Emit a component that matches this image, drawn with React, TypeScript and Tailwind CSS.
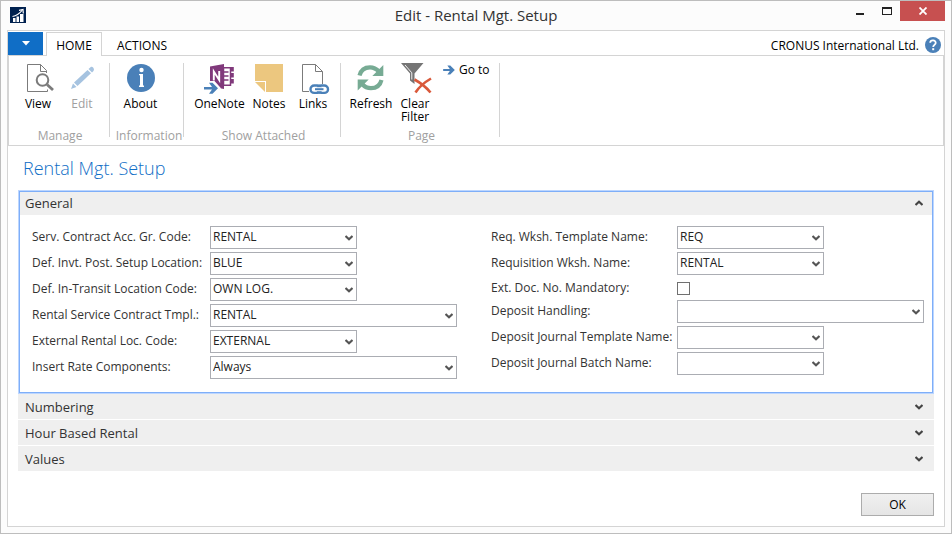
import { useState, type ReactNode } from "react";

function Chevron({ up = false, className = "" }: { up?: boolean; className?: string }) {
  return (
    <svg viewBox="0 0 8 6" className={`h-[6px] w-[8px] ${className}`} aria-hidden="true">
      <path
        d={up ? "M0.5 5L4 1.8L7.5 5" : "M0.5 1L4 4.2L7.5 1"}
        fill="none"
        stroke="currentColor"
        strokeWidth="2.2"
      />
    </svg>
  );
}

function Icon({ children }: { children: ReactNode }) {
  return (
    <svg viewBox="0 0 32 32" className="h-8 w-8 shrink-0 overflow-visible" fill="none" aria-hidden="true">
      {children}
    </svg>
  );
}

const ViewIcon = () => (
  <Icon>
    <path d="M24.5 11V8.5L18.5 2.5H5.5V29.5H25.5V27.5" stroke="#7b7b7b" />
    <path d="M18.5 2.5V9.5H25" stroke="#7b7b7b" />
    <circle cx="20.5" cy="18" r="5.8" fill="#fff" stroke="#7b7b7b" strokeWidth="2" />
    <path d="M25 22.5L31 28" stroke="#7b7b7b" strokeWidth="2.8" />
  </Icon>
);

const EditIcon = () => (
  <Icon>
    <path d="M5 27L7 21.5L10.5 25Z" fill="#a6c3e0" />
    <path d="M8 20.5L21.5 8L25 11.3L11.5 24Z" fill="#a6c3e0" />
    <path d="M22.5 7L25 4.8Q26.5 4.5 27.5 6T27.5 9L26 10.4Z" fill="#a6c3e0" />
  </Icon>
);

const AboutIcon = () => (
  <Icon>
    <circle cx="16" cy="16" r="14" fill="#4a80b8" />
    <circle cx="16.5" cy="8" r="2.2" fill="#fff" />
    <path d="M14 12H18V23.5H19V25H14V23.5H15V13.3H14Z" fill="#fff" />
  </Icon>
);

const ArrowShape = () => <path d="M0 4.7H8L5 0.5H8.5L14 6L8.5 11.5H5L8 7.3H0Z" fill="#4a80b8" />;

const OneNoteIcon = () => (
  <Icon>
    <path d="M19.5 5.7H26.5V23.3H19.5Z" fill="#fff" stroke="#80397b" strokeWidth="1.5" />
    <path d="M20 10H24.5M20 14H24.5M20 18H24.5" stroke="#80397b" strokeWidth="1.6" />
    <path d="M26.5 5H29.8V9.5H26.5ZM26.5 11H29.8V15.5H26.5ZM26.5 17H29.8V21.5H26.5Z" fill="#80397b" />
    <path d="M6 4.5L20 2V27L12 25.5L6 24Z" fill="#80397b" />
    <path d="M9.8 18.5V9.5L15.2 18V9" stroke="#fff" strokeWidth="1.9" />
    <path d="M3 19H10.5L17 26.3L10.5 33H3V28.7H-1V23.9H3Z" fill="#fff" />
    <g transform="translate(0 20.3)">
      <ArrowShape />
    </g>
  </Icon>
);

const NotesIcon = () => (
  <Icon>
    <path d="M2 2H30V30H13V19H2Z" fill="#ecc77f" />
    <path d="M2 20H12V30Z" fill="#ecc77f" />
  </Icon>
);

const LinksIcon = () => (
  <Icon>
    <path d="M12 29.5H5.5V2.5H18.5L25.5 9.5V22" stroke="#7b7b7b" />
    <path d="M18.5 2.5V9.5H25.5" stroke="#7b7b7b" />
    <rect x="13.5" y="23.5" width="10.5" height="7.4" rx="3.7" stroke="#4a80b8" strokeWidth="2.4" />
    <rect x="20.5" y="23.5" width="10.5" height="7.4" rx="3.7" stroke="#4a80b8" strokeWidth="2.4" />
    <path d="M18 27.2H26.5" stroke="#fff" strokeWidth="4" />
    <path d="M18 27.2H26.5" stroke="#4a80b8" strokeWidth="2" />
  </Icon>
);

const RefreshIcon = () => (
  <Icon>
    <path d="M4.5 13.5C6 7.5 9.5 5.3 15 5.3C19 5.3 21.5 6.8 24 9.5" stroke="#77ab94" strokeWidth="4.2" />
    <path d="M28.3 3V14H17.3Z" fill="#77ab94" />
    <path d="M26.5 18C25 24 21.5 26.2 16 26.2C12 26.2 9.5 24.7 7 22" stroke="#77ab94" strokeWidth="4.2" />
    <path d="M2.7 28.5V17.5H13.7Z" fill="#77ab94" />
  </Icon>
);

const ClearFilterIcon = () => (
  <Icon>
    <path d="M2 1H24.5L15.5 11.5V22L11 18.5V11.5Z" fill="#757575" />
    <path d="M6 3L12.8 10.8V17.5" stroke="#fff" strokeWidth="0.9" />
    <path d="M15.5 17.5C20 20 27 25 31.5 30.5" stroke="#d9593b" strokeWidth="2.6" />
    <path d="M32 16.5C26 20 20 25 16.5 30.5" stroke="#d9593b" strokeWidth="2.6" />
  </Icon>
);

function Tool({ icon, label, wide, disabled }: { icon: ReactNode; label: string; wide?: boolean; disabled?: boolean }) {
  return (
    <button
      type="button"
      disabled={disabled}
      className={`flex flex-col items-center text-center leading-[13px] ${wide ? "w-[55px]" : "w-[44px]"} ${disabled ? "text-[#a0a0a0]" : "text-black"}`}
    >
      {icon}
      <span className="mt-[3px]">{label}</span>
    </button>
  );
}

function Group({ caption, className = "pr-[5px] pl-2", children }: { caption: string; className?: string; children: ReactNode }) {
  return (
    <section aria-label={caption} className={`flex flex-col border-r border-[#d4d4d4] ${className}`}>
      <div className="-mt-px flex flex-1 items-start">{children}</div>
      <div className="-mb-1 h-[11px] text-center leading-[11px] whitespace-nowrap text-[#a0a0a0]">{caption}</div>
    </section>
  );
}

type FieldDef = { id: string; label: string; value?: string; wide?: boolean; check?: boolean };

const leftFields: FieldDef[] = [
  { id: "acc", label: "Serv. Contract Acc. Gr. Code:", value: "RENTAL" },
  { id: "invt", label: "Def. Invt. Post. Setup Location:", value: "BLUE" },
  { id: "transit", label: "Def. In-Transit Location Code:", value: "OWN LOG." },
  { id: "tmpl", label: "Rental Service Contract Tmpl.:", value: "RENTAL", wide: true },
  { id: "ext", label: "External Rental Loc. Code:", value: "EXTERNAL" },
  { id: "rate", label: "Insert Rate Components:", value: "Always", wide: true },
];

const rightFields: FieldDef[] = [
  { id: "reqt", label: "Req. Wksh. Template Name:", value: "REQ" },
  { id: "reqn", label: "Requisition Wksh. Name:", value: "RENTAL" },
  { id: "doc", label: "Ext. Doc. No. Mandatory:", check: true },
  { id: "dep", label: "Deposit Handling:", wide: true },
  { id: "djt", label: "Deposit Journal Template Name:" },
  { id: "djb", label: "Deposit Journal Batch Name:" },
];

function Field({ field, labelClass }: { field: FieldDef; labelClass: string }) {
  return (
    <div className={`flex items-center ${field.check ? "h-[22px] pt-[2px]" : "h-[26px]"}`}>
      <label htmlFor={field.id} className={`shrink-0 whitespace-nowrap ${labelClass}`}>
        {field.label}
      </label>
      {field.check ? (
        <input
          id={field.id}
          type="checkbox"
          className="h-[13px] w-[13px] appearance-none border border-[#707070] bg-white checked:bg-[#707070]"
        />
      ) : (
        <div className={`relative ${field.wide ? "w-[247px]" : "w-[147px]"}`}>
          <select
            id={field.id}
            defaultValue={field.value ?? ""}
            className="block h-[23px] w-full appearance-none border border-[#abadb3] bg-white pr-5 pb-px pl-[2px] text-[#222]"
          >
            <option value={field.value ?? ""}>{field.value ?? ""}</option>
          </select>
          <Chevron className="pointer-events-none absolute top-[9px] right-1 text-[#555]" />
        </div>
      )}
    </div>
  );
}

function SectionHeader({ title, open, framed, onClick }: { title: string; open?: boolean; framed?: boolean; onClick?: () => void }) {
  return (
    <button
      type="button"
      aria-expanded={!!open}
      onClick={onClick}
      className={`flex w-full items-center justify-between bg-[#efefef] text-left text-[13px] leading-5 text-[#333] ${framed ? "h-[23px] pr-[9px] pb-px pl-[5px]" : "h-[25px] pr-[11px] pl-[7px]"}`}
    >
      {title}
      <Chevron up={open} className="text-[#444]" />
    </button>
  );
}

export default function App() {
  const [open, setOpen] = useState(true);
  return (
    <div className="flex min-h-screen flex-col border border-[#bdbdbd] bg-[#fcfcfc] px-[6px] pb-[6px] font-['Open_Sans','Noto_Sans',sans-serif] text-[12px] text-[#333]">
      <header className="grid h-[29px] grid-cols-[1fr_auto_1fr] items-start">
        <svg viewBox="0 0 16 16" className="mt-[6px] ml-[3px] h-4 w-4" aria-hidden="true">
          <path d="M0 0H16V16H0Z" fill="#00214f" />
          <path d="M3 11H5.5V15H3ZM6.5 9.5H9V15H6.5ZM10 7H13.5V15H10Z" fill="#fff" />
          <path d="M2.5 9.5Q8 8.5 12 3.5M9 3.3L13 2.5L13.3 6.5" fill="none" stroke="#fff" strokeWidth="1.2" />
        </svg>
        <h1 className="text-[15px] leading-[29px] text-[#333]">Edit - Rental Mgt. Setup</h1>
        <div className="flex justify-end">
          <button type="button" aria-label="Minimize" className="flex h-5 w-[27px] items-center justify-center">
            <svg viewBox="0 0 8 8" className="h-2 w-2"><path d="M0 6H8V8H0Z" fill="#222" /></svg>
          </button>
          <button type="button" aria-label="Maximize" className="flex h-5 w-[27px] items-center justify-center">
            <svg viewBox="0 0 10 8" className="h-2 w-[10px]"><path d="M0 0H10V8H0ZM1 2V7H9V2Z" fill="#222" fillRule="evenodd" /></svg>
          </button>
          <button type="button" aria-label="Close" className="flex h-5 w-[45px] items-center justify-center bg-[#c75050]">
            <svg viewBox="0 0 8 8" className="h-2 w-2"><path d="M0.5 0.5L7.5 7.5M7.5 0.5L0.5 7.5" stroke="#fff" strokeWidth="1.8" /></svg>
          </button>
        </div>
      </header>

      <div className="flex flex-1 flex-col border border-[#d4d4d4] bg-white">
        <nav className="flex h-[25px] items-end pt-px">
          <div className="flex h-full w-[38px] shrink-0 border-b border-[#d4d4d4]">
            <button type="button" aria-label="Application menu" className="flex h-[23px] w-[35px] items-center justify-center bg-[#106ec6]">
              <svg viewBox="0 0 8 5" className="h-[5px] w-2"><path d="M0 0H8L4 4.5Z" fill="#fff" /></svg>
            </button>
          </div>
          <button type="button" className="h-full w-[56px] shrink-0 border border-b-0 border-[#d4d4d4] pt-[2px] text-black">
            HOME
          </button>
          <div className="flex h-full flex-1 items-center justify-between border-b border-[#d4d4d4] pt-1 pr-[3px] text-black">
            <button type="button" className="w-[80px]">ACTIONS</button>
            <div className="flex items-center gap-[6px]">
              <span>CRONUS International Ltd.</span>
              <button type="button" aria-label="Help" className="pb-[2px]">
                <svg viewBox="0 0 16 16" className="block h-4 w-4">
                  <circle cx="8" cy="8" r="8" fill="#4a80b8" />
                  <path d="M5.2 5.8C5.4 2.5 11 2.8 10.7 6C10.5 8 8.2 7.8 8.2 10" fill="none" stroke="#fff" strokeWidth="1.8" />
                  <path d="M7.2 11.2H9.2V13.2H7.2Z" fill="#fff" />
                </svg>
              </button>
            </div>
          </div>
        </nav>

        <div className="flex h-[90px] border-x border-b border-[#d4d4d4] pt-[7px] pb-2">
          <Group caption="Manage" className="pr-[5px] pl-[7px]">
            <Tool icon={<ViewIcon />} label="View" />
            <Tool icon={<EditIcon />} label="Edit" disabled />
          </Group>
          <Group caption="Information" className="w-[74px] items-center pl-[5px]">
            <div className="flex w-[61px]">
              <Tool icon={<AboutIcon />} label="About" />
            </div>
          </Group>
          <Group caption="Show Attached">
            <Tool icon={<OneNoteIcon />} label="OneNote" wide />
            <Tool icon={<NotesIcon />} label="Notes" />
            <Tool icon={<LinksIcon />} label="Links" />
          </Group>
          <Group caption="Page">
            <Tool icon={<RefreshIcon />} label="Refresh" />
            <Tool icon={<ClearFilterIcon />} label="Clear Filter" />
            <button type="button" className="flex w-[57px] items-center gap-1 pl-[6px] leading-4 whitespace-nowrap text-black">
              <svg viewBox="0 0 14 12" className="h-[10px] w-[12px] shrink-0"><ArrowShape /></svg>
              Go to
            </button>
          </Group>
        </div>

        <main className="flex flex-1 flex-col px-[10px] pb-[10px]">
          <h2 className="mt-2 mb-2 pl-[5px] text-[18px] leading-7 font-light text-[#106ec6]">Rental Mgt. Setup</h2>
          <div className="border border-[#bcd6ff]">
            <div className="border border-[#7eaef8]">
              <SectionHeader title="General" framed open={open} onClick={() => setOpen(!open)} />
              {open && (
                <div className="grid grid-cols-2 gap-x-[26px] pt-[9px] pr-2 pb-3 pl-3">
                  <div>
                    {leftFields.map((f) => (
                      <Field key={f.id} field={f} labelClass="w-[178px]" />
                    ))}
                  </div>
                  <div>
                    {rightFields.map((f) => (
                      <Field key={f.id} field={f} labelClass="w-[186px]" />
                    ))}
                  </div>
                </div>
              )}
            </div>
          </div>
          <div className="flex flex-col gap-px">
            <SectionHeader title="Numbering" />
            <SectionHeader title="Hour Based Rental" />
            <SectionHeader title="Values" />
          </div>
          <div className="mt-auto flex justify-end">
            <button
              type="button"
              className="h-[23px] w-[73px] border border-[#acacac] bg-linear-to-b from-[#f0f0f0] to-[#e5e5e5] text-black"
            >
              OK
            </button>
          </div>
        </main>
      </div>
    </div>
  );
}
